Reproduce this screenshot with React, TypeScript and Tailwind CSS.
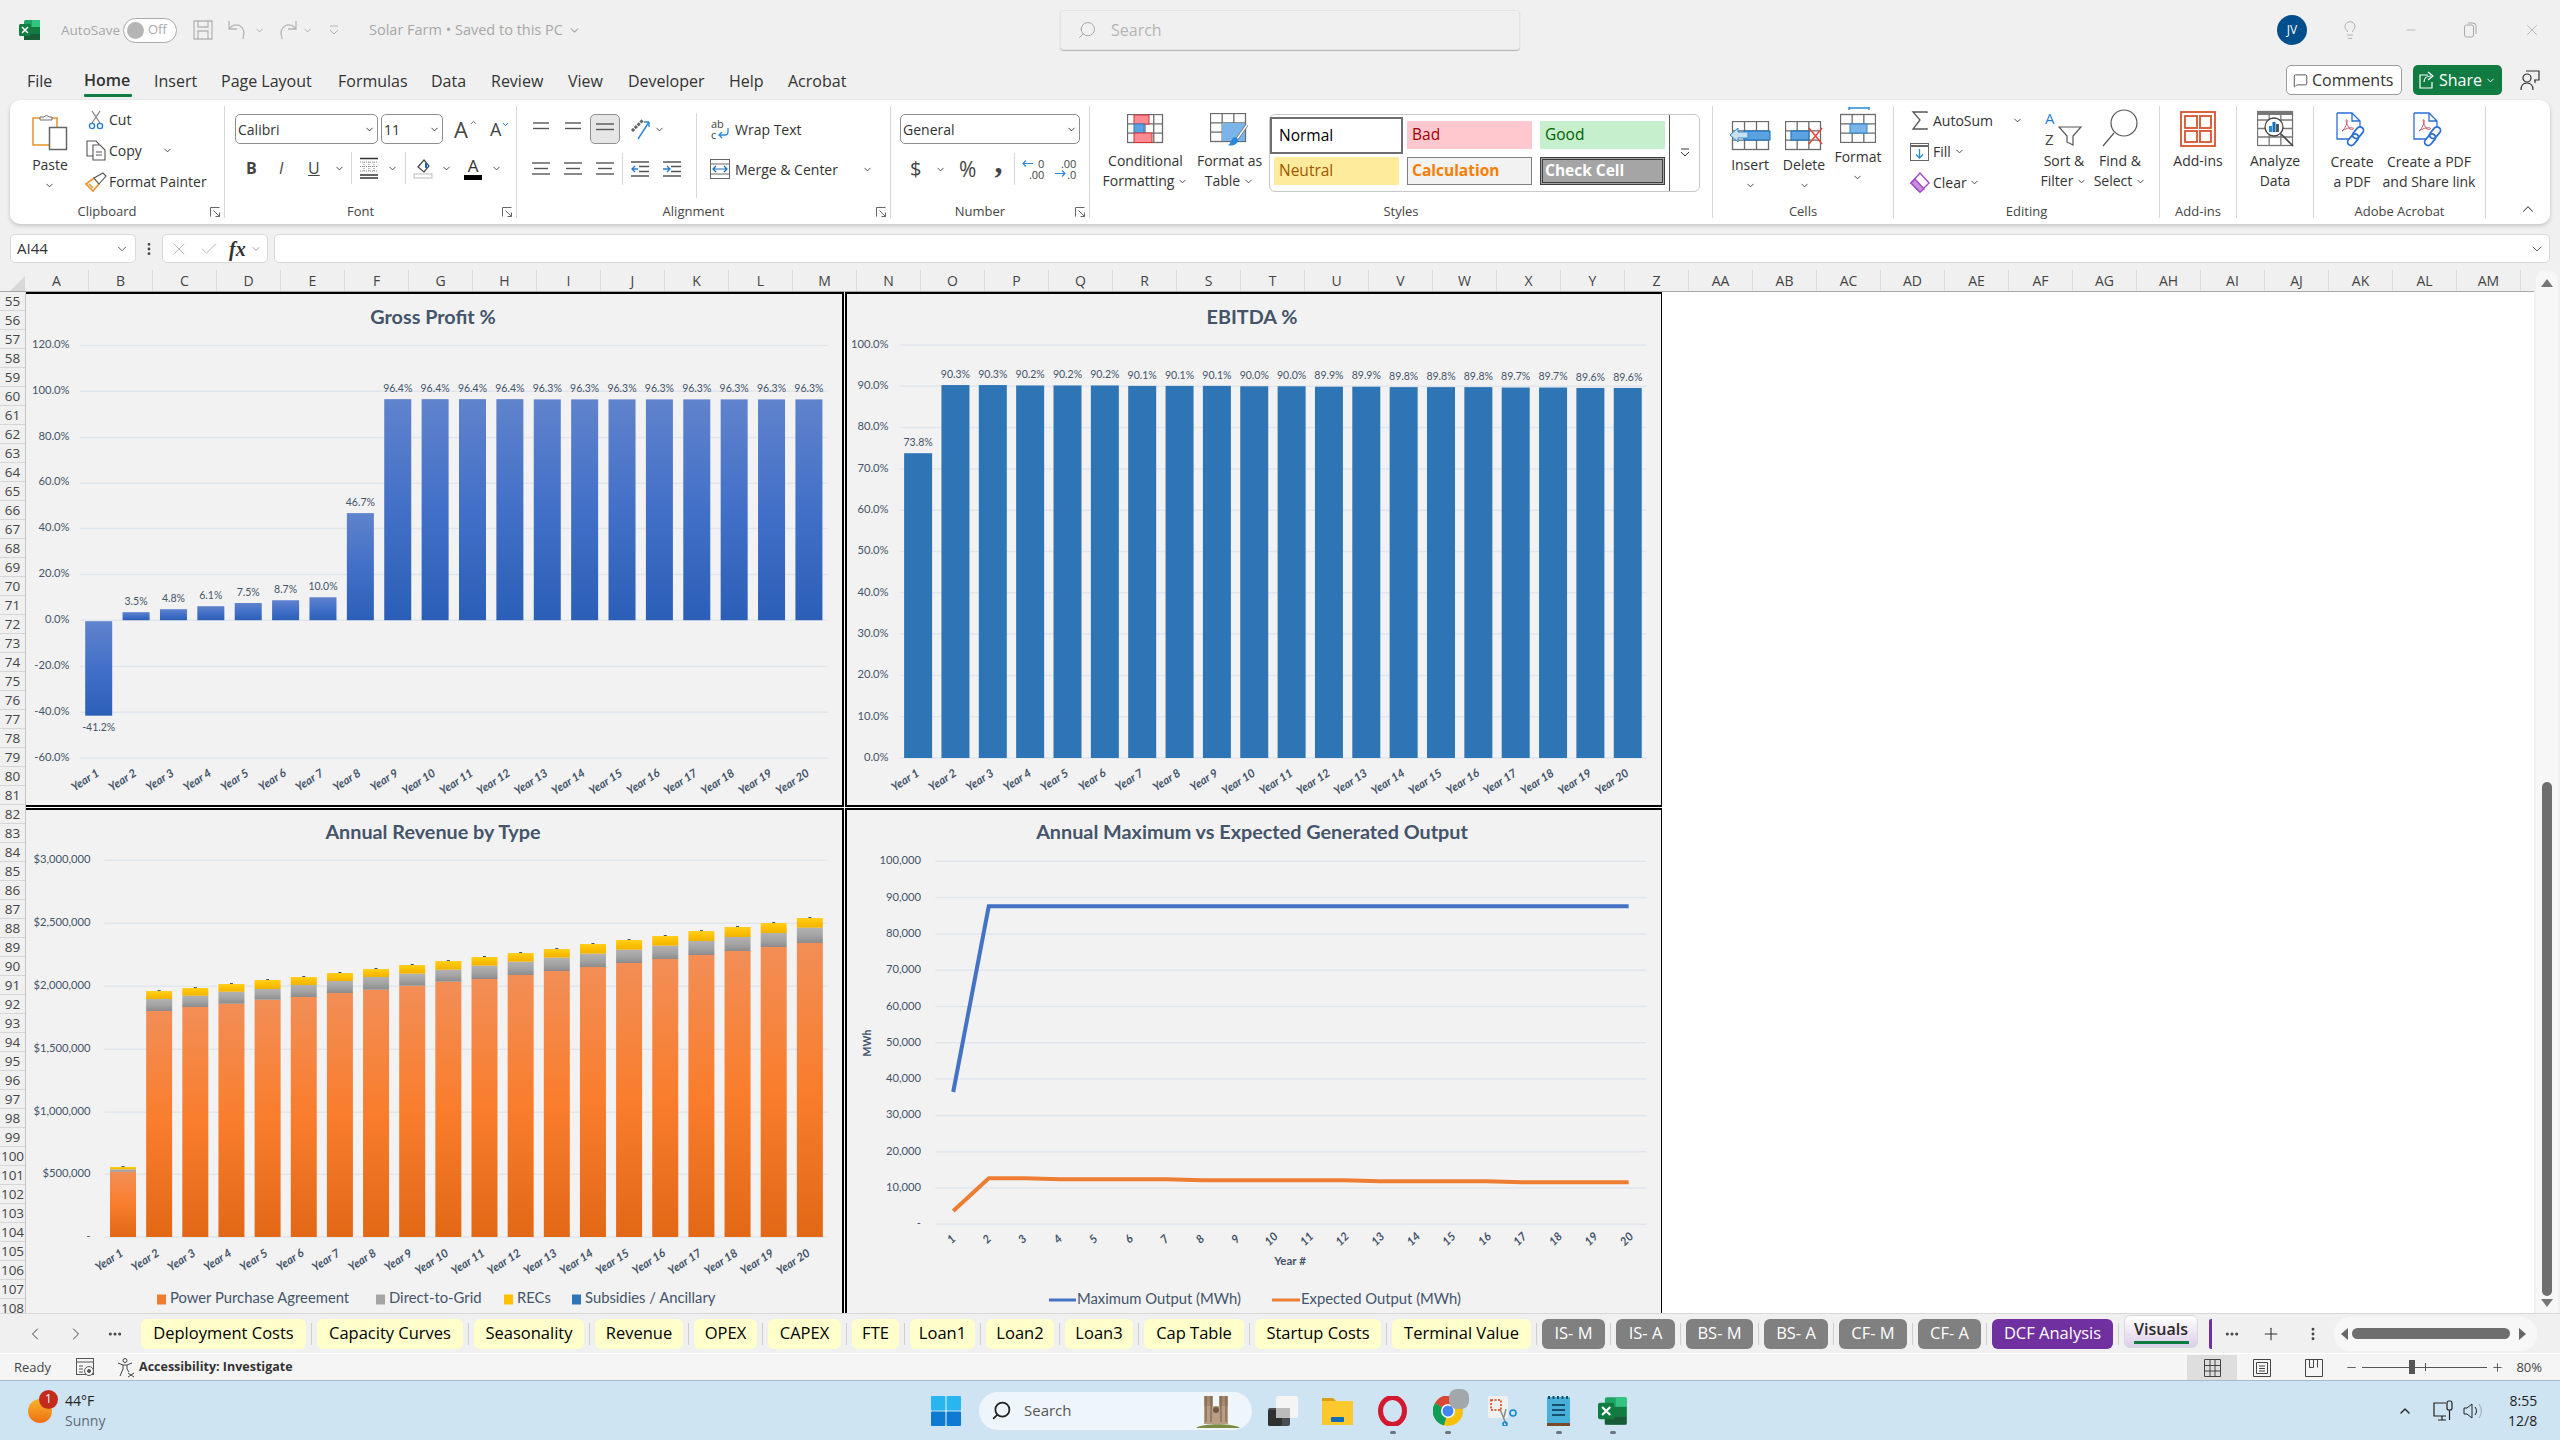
import React from 'react';
import { ChevronDown, ChevronUp, ChevronLeft, ChevronRight, MoreHorizontal, MoreVertical, Plus, Minus, X, Check, Lightbulb, MessageSquare, Search } from 'lucide-react';

const years = Array.from({ length: 20 }, (_, i) => `Year ${i + 1}`);
const columns = [
	'A','B','C','D','E','F','G','H','I','J','K','L','M','N','O','P','Q','R','S','T','U','V','W','X','Y','Z',
	'AA','AB','AC','AD','AE','AF','AG','AH','AI','AJ','AK','AL','AM',
];
const rows = Array.from({ length: 54 }, (_, i) => 55 + i);

const grossProfit = [-41.2, 3.5, 4.8, 6.1, 7.5, 8.7, 10.0, 46.7, 96.4, 96.4, 96.4, 96.4, 96.3, 96.3, 96.3, 96.3, 96.3, 96.3, 96.3, 96.3];
const ebitda = [73.8, 90.3, 90.3, 90.2, 90.2, 90.2, 90.1, 90.1, 90.1, 90.0, 90.0, 89.9, 89.9, 89.8, 89.8, 89.8, 89.7, 89.7, 89.6, 89.6];
// stack tops in page pixels: ppa, direct-to-grid, RECs
const revenueTops = [
	[1171.7, 1169.3, 1167], [1011, 999, 991], [1007, 995.7, 988], [1003.7, 991.7, 984], [999.7, 989, 980],
	[997, 985, 977], [993, 981, 973], [989.7, 977, 969], [985.7, 973.7, 965], [981.7, 969.7, 961],
	[979, 965.7, 957], [975, 961.7, 953], [971, 957.7, 949], [967, 953.7, 944], [963, 949.7, 940],
	[959, 945.7, 936], [955, 941, 931], [951, 937, 927], [947, 933, 923], [943, 927.7, 918],
];
const expected = [1211, 1178.3, 1178.3, 1179.3, 1179.3, 1179.3, 1179.3, 1180.3, 1180.3, 1180.3, 1180.3, 1180.3, 1181.3, 1181.3, 1181.3, 1181.3, 1182.3, 1182.3, 1182.3, 1182.3];

const sheetTabs = [
	{ name: 'Deployment Costs', w: 165, tone: 'y' },
	{ name: 'Capacity Curves', w: 146, tone: 'y' },
	{ name: 'Seasonality', w: 110, tone: 'y' },
	{ name: 'Revenue', w: 88, tone: 'y' },
	{ name: 'OPEX', w: 63, tone: 'y' },
	{ name: 'CAPEX', w: 73, tone: 'y' },
	{ name: 'FTE', w: 47, tone: 'y' },
	{ name: 'Loan1', w: 65, tone: 'y' },
	{ name: 'Loan2', w: 68, tone: 'y' },
	{ name: 'Loan3', w: 68, tone: 'y' },
	{ name: 'Cap Table', w: 100, tone: 'y' },
	{ name: 'Startup Costs', w: 126, tone: 'y' },
	{ name: 'Terminal Value', w: 139, tone: 'y' },
	{ name: 'IS- M', w: 63, tone: 'g' },
	{ name: 'IS- A', w: 59, tone: 'g' },
	{ name: 'BS- M', w: 67, tone: 'g' },
	{ name: 'BS- A', w: 64, tone: 'g' },
	{ name: 'CF- M', w: 68, tone: 'g' },
	{ name: 'CF- A', w: 63, tone: 'g' },
	{ name: 'DCF Analysis', w: 121, tone: 'p' },
];

const ExcelLogo = ({ size = 22 }: { size?: number }) => (
	<svg width={size} height={size} viewBox="0 0 22 22">
		<rect x="5" y="1" width="16" height="20" rx="1.5" fill="#21a366" />
		<rect x="13" y="1" width="8" height="7" fill="#33c481" />
		<rect x="5" y="8" width="16" height="7" fill="#107c41" />
		<rect x="5" y="15" width="16" height="6" fill="#185c37" />
		<rect x="0" y="5" width="12" height="12" rx="1.5" fill="#107c41" />
		<path d="M3 8l6 6M9 8l-6 6" stroke="#fff" strokeWidth="1.6" />
	</svg>
);

const TableGrid = ({ x = 0, y = 0, w, h, cols, rws, color = '#6b6b6b' }: { x?: number; y?: number; w: number; h: number; cols: number; rws: number; color?: string }) => (
	<g stroke={color} strokeWidth="1.3" fill="none">
		<rect x={x + 0.5} y={y + 0.5} width={w} height={h} fill="#fff" />
		{Array.from({ length: cols - 1 }, (_, i) => (
			<path key={i} d={`M${x + 0.5 + ((i + 1) * w) / cols} ${y}v${h}`} />
		))}
		{Array.from({ length: rws - 1 }, (_, i) => (
			<path key={i} d={`M${x} ${y + 0.5 + ((i + 1) * h) / rws}h${w}`} />
		))}
	</g>
);

const PasteIcon = () => (
	<svg width="36" height="38" viewBox="0 0 36 38">
		<rect x="1" y="5" width="24" height="27" fill="#fff" stroke="#e8912d" strokeWidth="1.5" />
		<path d="M8 7V4h4a3 3 0 0 1 5 0h3v3z" fill="#f2f2f2" stroke="#777" />
		<rect x="17.5" y="14.5" width="17" height="22" fill="#fff" stroke="#666" strokeWidth="1.5" />
	</svg>
);
const CutIcon = () => (
	<svg width="16" height="20" viewBox="0 0 16 20" fill="none">
		<path d="M4 13L12 1M12 13L4 1" stroke="#777" strokeWidth="1.1" />
		<circle cx="4" cy="16" r="2.6" stroke="#2b7cd3" strokeWidth="1.4" />
		<circle cx="12" cy="16" r="2.6" stroke="#2b7cd3" strokeWidth="1.4" />
	</svg>
);
const CopyIcon = () => (
	<svg width="21" height="21" viewBox="0 0 21 21" fill="none" stroke="#555" strokeWidth="1.1">
		<path d="M1 1h9l3 3v12H1z" fill="#fff" />
		<path d="M7 5h7l5 5v10H7z" fill="#fff" />
		<path d="M10 12h6M10 15h6" />
	</svg>
);
const PainterIcon = () => (
	<svg width="22" height="20" viewBox="0 0 22 20">
		<path d="M1 12l8-6 5 6-6 7z" fill="#fff" stroke="#e8912d" strokeWidth="1.6" />
		<path d="M9 6l9-5 3 3-7 8z" fill="#fff" stroke="#555" strokeWidth="1.1" />
		<path d="M4 12l4 4" stroke="#e8912d" strokeWidth="1.6" />
	</svg>
);
const Launcher = () => (
	<svg width="11" height="11" viewBox="0 0 11 11" fill="none" stroke="#666">
		<path d="M.5 9.5v-9h9" />
		<path d="M3.5 3.5l6 6M9.5 5.5v4h-4" />
	</svg>
);
const Arrow = ({ className = 'text-[#444]' }: { className?: string }) => <ChevronDown size={11} strokeWidth={2} className={className} />;

const LinesIcon = ({ widths, selected }: { widths: number[]; selected?: boolean }) => (
	<svg width="18" height="18" viewBox="0 0 18 18" stroke="#555" strokeWidth="1.4" className={selected ? 'mt-[2px]' : ''}>
		{widths.map((w, i) => (
			<path key={i} d={`M${(18 - w) / 2} ${3 + i * 5.5}h${w}`} />
		))}
	</svg>
);
const IndentIcon = ({ flip }: { flip?: boolean }) => (
	<svg width="18" height="16" viewBox="0 0 18 16" fill="none" strokeWidth="1.4">
		<path d="M0 1h18M8 5.5h10M8 10.5h10M0 15h18" stroke="#555" />
		<path d={flip ? 'M0 8h6M4 5l3 3-3 3' : 'M7 8H1M4 5L1 8l3 3'} stroke="#2b7cd3" />
	</svg>
);

const ConditionalIcon = () => (
	<svg width="37" height="30" viewBox="0 0 37 30">
		<TableGrid w={35} h={28} cols={4} rws={3} />
		<rect x="7" y="1" width="15" height="9" fill="#ff8a91" stroke="#d13438" />
		<rect x="7" y="10" width="10" height="9" fill="#5ba3e0" stroke="#2b7cd3" />
		<rect x="7" y="19" width="18" height="9.5" fill="#ff8a91" stroke="#d13438" />
	</svg>
);
const TableIcon = () => (
	<svg width="39" height="34" viewBox="0 0 39 34">
		<TableGrid w={35} h={28} cols={3} rws={3} />
		<rect x="12" y="10" width="23" height="18" fill="#7ab4e8" />
		<path d="M37 12L27 26" stroke="#666" strokeWidth="3" />
		<path d="M37 12L27 26" stroke="#fff" strokeWidth="1.5" />
		<path d="M24 24c4 0 5 3 3 6-3 3-7 3-9 2 3-1 3-6 6-8z" fill="#2b88d8" />
	</svg>
);
const InsertIcon = () => (
	<svg width="41" height="30" viewBox="0 0 41 30">
		<TableGrid x={2} w={36} h={28} cols={3} rws={3} />
		<rect x="14" y="10" width="26" height="9" fill="#5ba3e0" stroke="#0f6cbd" />
		<path d="M0 14l8-7v4h10v6H8v4z" fill="#c7e0f4" stroke="#2b88d8" />
	</svg>
);
const DeleteIcon = () => (
	<svg width="38" height="30" viewBox="0 0 38 30">
		<TableGrid w={35} h={28} cols={3} rws={3} />
		<rect x="6" y="10" width="18" height="9" fill="#5ba3e0" stroke="#0f6cbd" />
		<path d="M24 7l13 16M37 7L24 23" stroke="#e8463a" strokeWidth="1.5" />
	</svg>
);
const FormatIcon = () => (
	<svg width="36" height="36" viewBox="0 0 36 36">
		<path d="M9 1h20M9 0v3M29 0v3" stroke="#2b88d8" strokeWidth="1.4" />
		<TableGrid y={7} w={35} h={28} cols={3} rws={3} />
		<rect x="10" y="17" width="17" height="9" fill="#7ab4e8" stroke="#2b88d8" />
	</svg>
);
const SigmaIcon = () => (
	<svg width="18" height="19" viewBox="0 0 18 19" fill="none" stroke="#555" strokeWidth="1.3">
		<path d="M16 2V1H2l7 8-7 9h14v-1" />
	</svg>
);
const FillIcon = () => (
	<svg width="20" height="18" viewBox="0 0 20 18" fill="none">
		<rect x=".5" y=".5" width="18" height="17" fill="#fff" stroke="#666" />
		<path d="M1 3h17" stroke="#666" strokeWidth="2" />
		<path d="M9.5 6v9M6 11.5l3.5 3.5 3.5-3.5" stroke="#2b88d8" strokeWidth="1.3" />
	</svg>
);
const ClearIcon = () => (
	<svg width="20" height="21" viewBox="0 0 20 21" fill="none" stroke="#a349c4" strokeWidth="1.4">
		<path d="M10 1l9 10-9 9-9-9z" fill="#fff" />
		<path d="M1 11l4-4 9 10-4 3z" fill="#c88fe0" />
	</svg>
);
const SortIcon = () => (
	<div className="relative flex h-[36px] w-[38px] flex-col justify-between text-[15px] leading-[15px]">
		<div className="h-[15px] overflow-visible text-[#2b7cd3]">A</div>
		<div className="h-[15px] text-[#444]">Z</div>
		<svg width="24" height="20" viewBox="0 0 24 20" className="absolute left-[13px] top-[15px]">
			<path d="M1 1h22l-8 9v9l-6-3v-6z" fill="#fff" stroke="#555" strokeWidth="1.2" />
		</svg>
	</div>
);
const FindIcon = () => (
	<svg width="38" height="38" viewBox="0 0 38 38" fill="none" stroke="#555" strokeWidth="1.2">
		<circle cx="23" cy="14" r="13" fill="#fff" />
		<path d="M13 24L2 37" />
	</svg>
);
const AddinsIcon = () => (
	<svg width="36" height="36" viewBox="0 0 36 36" fill="none" stroke="#d9512c" strokeWidth="1.8">
		<rect x="1" y="1" width="34" height="34" />
		<rect x="5" y="5" width="12" height="12" />
		<rect x="20" y="5" width="11" height="12" />
		<rect x="5" y="20" width="12" height="11" />
		<rect x="20" y="20" width="11" height="11" />
	</svg>
);
const AnalyzeIcon = () => (
	<svg width="37" height="37" viewBox="0 0 37 37">
		<TableGrid y={1} w={35} h={34} cols={3} rws={4} color="#777" />
		<rect x=".5" y="1" width="35" height="4" fill="#777" />
		<circle cx="17" cy="17" r="9" fill="#fff" stroke="#444" strokeWidth="1.3" />
		<rect x="12" y="16" width="3" height="6" fill="#2b88d8" />
		<rect x="15.5" y="12" width="3" height="10" fill="#0f6cbd" />
		<rect x="19" y="14" width="3" height="8" fill="#555" />
		<path d="M24 24l12 12" stroke="#444" strokeWidth="1.6" />
	</svg>
);
const PdfIcon = () => (
	<svg width="33" height="36" viewBox="0 0 33 36" fill="none" stroke="#2b6fd4" strokeWidth="1.3">
		<path d="M1 1h15l8 8v14M24 9h-8V1M1 1v26h12" fill="#fff" />
		<path d="M6 19c3-2 6-9 5-11-1-2-2 3 3 9 2 1 5 0 3-1-3-1-8 1-11 3z" strokeWidth=".9" stroke="#c04b5a" />
		<rect x="19" y="14" width="7" height="13" rx="3.5" transform="rotate(40 22 20)" fill="#fff" strokeWidth="1.8" />
		<rect x="14" y="21" width="7" height="13" rx="3.5" transform="rotate(40 17 27)" fill="none" strokeWidth="1.8" />
	</svg>
);

const Group = ({ width, label, launcher, children, last }: { width: number; label?: string; launcher?: boolean; children: React.ReactNode; last?: boolean }) => (
	<div className={`relative flex h-[112px] flex-col ${last ? '' : 'border-r border-[#d6d6d6]'}`} style={{ width }}>
		<div className="flex flex-1">{children}</div>
		<div className={`h-[14px] text-center text-[13px] leading-[14px] text-[#444] ${launcher ? 'pr-[20px]' : ''}`}>{label}</div>
		{launcher && (
			<span className="absolute bottom-[0px] right-[3px] flex">
				<Launcher />
			</span>
		)}
	</div>
);

const BigButton = ({ icon, lines, width, arrow = 'below', top = 4, iconH = 41, gap = 4 }: { icon: React.ReactNode; lines: string[]; width: number; arrow?: 'below' | 'inline' | 'none'; top?: number; iconH?: number; gap?: number }) => (
	<div className="flex flex-col items-center text-[14px] leading-[20px] text-[#333]" style={{ width }}>
		<div className="flex items-end" style={{ marginTop: top, height: iconH }}>{icon}</div>
		<div className="whitespace-nowrap text-center" style={{ marginTop: gap }}>
			{lines.map((line, i) => (
				<div key={line} className="flex items-center justify-center gap-[3px]">
					{line}
					{arrow === 'inline' && i === lines.length - 1 && <Arrow />}
				</div>
			))}
			{arrow === 'below' && (
				<div className="flex h-[20px] items-center justify-center">
					<Arrow />
				</div>
			)}
		</div>
	</div>
);

const SmallRow = ({ icon, label, iconW = 24 }: { icon: React.ReactNode; label: string; iconW?: number }) => (
	<div className="flex h-[31px] items-center text-[14px] text-[#333]">
		<div className="flex items-center justify-center" style={{ width: iconW }}>{icon}</div>
		<span className="ml-[1px] whitespace-nowrap">{label}</span>
	</div>
);

const SelectBox = ({ value, width, arrowSize = 11 }: { value: string; width: number; arrowSize?: number }) => (
	<div className="flex h-[30px] items-center justify-between rounded-[5px] border border-[#8f8f8f] bg-white pl-[2px] pr-[2px] text-[14px] text-[#333]" style={{ width }}>
		<span>{value}</span>
		<ChevronDown size={arrowSize} strokeWidth={2} className="text-[#333]" />
	</div>
);

const VSep = ({ className = 'h-[32px]' }: { className?: string }) => <div className={`w-px bg-[#d6d6d6] ${className}`} />;

const DecimalIcon = ({ top, bottom, more }: { top: string; bottom: string; more?: boolean }) => (
	<div className="relative flex h-[22px] w-[22px] flex-col items-end text-[11px] leading-[11px] text-[#444]">
		<span>{top}</span>
		<span>{bottom}</span>
		<svg width="12" height="9" viewBox="0 0 12 9" fill="none" stroke="#2b88d8" strokeWidth="1.2" className={`absolute left-0 ${more ? 'top-[11px]' : 'top-[1px]'}`}>
			<path d={more ? 'M1 4.5h10M8 1.5l3 3-3 3' : 'M11 4.5H1M4 1.5l-3 3 3 3'} />
		</svg>
	</div>
);

const WrapIcon = () => (
	<div className="relative ml-[1px] h-[22px] w-[19px] text-[11px] leading-[11px] text-[#444]">
		<div>ab</div>
		<div>c</div>
		<svg width="13" height="11" viewBox="0 0 13 11" fill="none" stroke="#2b88d8" strokeWidth="1.3" className="absolute left-[6px] top-[10px]">
			<path d="M11 0v4a3 3 0 0 1-3 3H2M5 4L2 7l3 3" />
		</svg>
	</div>
);

const Ribbon = () => (
	<div className="mx-[10px] flex h-[124px] w-[2540px] items-start rounded-[10px] bg-white pt-[6px] shadow-[0_2px_4px_rgba(0,0,0,0.18)]">
		<Group width={215} label="Clipboard" launcher>
			<div className="w-[75px] pl-[7px]">
				<BigButton icon={<PasteIcon />} lines={['Paste']} width={66} />
			</div>
			<div className="-ml-[1px] mt-[-2px] flex flex-col">
				<SmallRow icon={<CutIcon />} label="Cut" />
				<div className="flex items-center">
					<SmallRow icon={<CopyIcon />} label="Copy" />
					<span className="ml-[20px]"><Arrow /></span>
				</div>
				<SmallRow icon={<PainterIcon />} label="Format Painter" />
			</div>
		</Group>

		<Group width={292} label="Font" launcher>
			<div className="pl-[10px] pt-[8px]">
				<div className="flex items-center gap-[3px]">
					<SelectBox value="Calibri" width={143} />
					<SelectBox value="11" width={62} />
					<div className="relative ml-[8px] flex w-[21px] text-[22px] leading-none text-[#444]">A<ChevronUp size={9} className="absolute -right-[3px] top-0" /></div>
					<div className="relative ml-[12px] flex w-[17px] text-[18px] leading-none text-[#444]">A<ChevronDown size={9} strokeWidth={2.5} className="absolute -right-[3px] top-0 text-[#0f6cbd]" /></div>
				</div>
				<div className="mt-[12px] flex h-[24px] items-center text-[#444]">
					<span className="ml-[11px] w-[12px] text-[16px] font-bold">B</span>
					<span className="ml-[21px] w-[8px] text-[16px] italic">I</span>
					<span className="ml-[21px] w-[12px] text-[16px] underline">U</span>
					<span className="ml-[14px]"><Arrow /></span>
					<VSep className="ml-[6px] h-[32px]" />
					<svg width="20" height="22" viewBox="0 0 20 22" fill="none" className="ml-[7px]">
						<path d="M1 1.5h18M1 21h18M1 18h18" stroke="#333" strokeWidth="1.6" />
						<path d="M1 5h18M1 9.5h18M1 14h18M5 5v9M10 5v9M15 5v9" stroke="#888" strokeDasharray="1 1" />
					</svg>
					<span className="ml-[8px]"><Arrow /></span>
					<VSep className="ml-[7px] h-[32px]" />
					<svg width="20" height="22" viewBox="0 0 20 22" fill="none" className="ml-[7px]">
						<path d="M5 10l6-7 5 6-5 6z" stroke="#444" strokeWidth="1.2" />
						<path d="M13 6v5" stroke="#0f6cbd" strokeWidth="2" />
						<rect x="1" y="17" width="18" height="4" fill="#fff" stroke="#bbb" />
					</svg>
					<span className="ml-[8px]"><Arrow /></span>
					<div className="ml-[12px] flex w-[18px] flex-col items-center text-[17px] leading-[17px] text-[#333]">
						A
						<div className="mt-[1px] h-[5px] w-[18px] bg-black" />
					</div>
					<span className="ml-[9px]"><Arrow /></span>
				</div>
			</div>
		</Group>

		<Group width={374} label="Alignment" launcher>
			<div className="pl-[15px] pt-[8px]">
				<div className="flex h-[30px] items-center">
					<div className="w-[32px]"><LinesIcon widths={[16, 16]} /></div>
					<div className="w-[26px]"><LinesIcon widths={[16, 16]} /></div>
					<div className="flex h-[30px] w-[30px] items-center justify-center rounded-[5px] border border-[#8f8f8f] bg-[#e6e6e6]"><LinesIcon widths={[18, 18]} selected /></div>
					<svg width="22" height="24" viewBox="0 0 22 24" fill="none" className="ml-[9px]">
						<path d="M3 14L14 3" stroke="#666" strokeWidth="3" strokeDasharray="3 1" />
						<path d="M9 22L20 5M20 5v5M20 5h-5" stroke="#2b88d8" strokeWidth="1.4" />
					</svg>
					<span className="ml-[3px]"><Arrow /></span>
				</div>
				<div className="mt-[15px] flex h-[20px] items-center">
					<div className="w-[32px]"><LinesIcon widths={[18, 14, 18]} /></div>
					<div className="w-[32px]"><LinesIcon widths={[18, 14, 18]} /></div>
					<div className="w-[26px]"><LinesIcon widths={[18, 14, 18]} /></div>
					<VSep className="h-[32px]" />
					<div className="ml-[8px] w-[32px]"><IndentIcon /></div>
					<div className="w-[18px]"><IndentIcon flip /></div>
				</div>
			</div>
			<div className="ml-[15px] mt-[7px] h-[85px] w-px bg-[#d6d6d6]" />
			<div className="flex flex-col pl-[13px] pt-[9px] text-[14px] text-[#333]">
				<div className="flex h-[28px] items-center gap-[5px]">
					<WrapIcon />
					Wrap Text
				</div>
				<div className="mt-[16px] flex h-[20px] items-center gap-[5px]">
					<svg width="20" height="20" viewBox="0 0 20 20" fill="none">
						<rect x=".5" y=".5" width="19" height="19" stroke="#666" />
						<path d="M.5 5h19M.5 15h19" stroke="#666" />
						<rect x="1" y="6" width="18" height="8" fill="#fff" />
						<path d="M3 10h14M6 7l-3 3 3 3M14 7l3 3-3 3" stroke="#0f6cbd" strokeWidth="1.2" />
					</svg>
					Merge &amp; Center
					<span className="ml-[19px]"><Arrow /></span>
				</div>
			</div>
		</Group>

		<Group width={199} label="Number" launcher>
			<div className="pl-[9px] pt-[8px]">
				<SelectBox value="General" width={180} />
				<div className="mt-[14px] flex h-[22px] items-center text-[#444]">
					<span className="ml-[10px] w-[13px] text-[20px] leading-none">$</span>
					<span className="ml-[12px]"><Arrow /></span>
					<span className="ml-[13px] text-[21px] leading-none">%</span>
					<span className="-mt-[14px] ml-[18px] w-[12px] font-['Liberation_Serif'] text-[32px] font-bold leading-[22px]">,</span>
					<VSep className="ml-[8px] h-[32px]" />
					<div className="ml-[7px]"><DecimalIcon top="0" bottom=".00" /></div>
					<div className="ml-[10px]"><DecimalIcon top=".00" bottom=".0" more /></div>
				</div>
			</div>
		</Group>

		<Group width={623} label="Styles">
			<div className="flex pl-[9px] pt-[2px]">
				<BigButton icon={<ConditionalIcon />} lines={['Conditional', 'Formatting']} width={93} arrow="inline" top={4} iconH={32} gap={7} />
				<BigButton icon={<TableIcon />} lines={['Format as', 'Table']} width={75} arrow="inline" top={4} iconH={35} gap={4} />
			</div>
			<div className="ml-[2px] mt-[8px] flex h-[78px] w-[431px] rounded-[6px] border border-[#c8c8c8]">
				<div className="mt-[2px] grid h-[75px] w-[400px] grid-cols-[133px_133px_125px] grid-rows-[40px_35px] text-[15.5px]">
					<div className="ml-[0px] flex h-[37px] w-[133px] items-center border-2 border-[#6e6e6e] bg-white pl-[7px] text-black">Normal</div>
					<div className="ml-[4px] mt-[4px] flex h-[28px] w-[125px] items-center bg-[#ffc7ce] pl-[5px] text-[#9c0006]">Bad</div>
					<div className="ml-[4px] mt-[4px] flex h-[28px] w-[125px] items-center bg-[#c6efce] pl-[5px] text-[#006100]">Good</div>
					<div className="ml-[4px] flex h-[28px] w-[125px] items-center bg-[#ffeb9c] pl-[5px] text-[#9c5700]">Neutral</div>
					<div className="ml-[4px] flex h-[28px] w-[125px] items-center border border-[#7f7f7f] bg-[#f2f2f2] pl-[4px] font-bold text-[#fa7d00]">Calculation</div>
					<div className="ml-[4px] flex h-[28px] w-[125px] items-center border-[3px] border-double border-[#3f3f3f] bg-[#a5a5a5] pl-[2px] font-bold text-white">Check Cell</div>
				</div>
				<div className="ml-auto flex w-[30px] items-center justify-center rounded-r-[6px] border-l border-[#555]">
					<svg width="10" height="10" viewBox="0 0 10 10" fill="none" stroke="#333"><path d="M1 1h8M1 4l4 4 4-4" /></svg>
				</div>
			</div>
		</Group>

		<Group width={181} label="Cells">
			<div className="flex pl-[10px]">
				<BigButton icon={<InsertIcon />} lines={['Insert']} width={54} />
				<BigButton icon={<DeleteIcon />} lines={['Delete']} width={54} />
				<BigButton icon={<FormatIcon />} lines={['Format']} width={54} top={-4} />
			</div>
		</Group>

		<Group width={266} label="Editing">
			<div className="ml-[14px] mt-[-1px] flex w-[131px] flex-col">
				<div className="flex items-center">
					<SmallRow icon={<SigmaIcon />} label="AutoSum" />
					<span className="ml-[19px]"><Arrow /></span>
				</div>
				<div className="flex items-center">
					<SmallRow icon={<FillIcon />} label="Fill" />
					<span className="ml-[3px]"><Arrow /></span>
				</div>
				<div className="flex items-center">
					<SmallRow icon={<ClearIcon />} label="Clear" />
					<span className="ml-[2px]"><Arrow /></span>
				</div>
			</div>
			<BigButton icon={<SortIcon />} lines={['Sort &', 'Filter']} width={50} arrow="inline" top={0} />
			<div className="ml-[3px]">
				<BigButton icon={<FindIcon />} lines={['Find &', 'Select']} width={56} arrow="inline" top={0} />
			</div>
		</Group>

		<Group width={77} label="Add-ins">
			<BigButton icon={<AddinsIcon />} lines={['Add-ins']} width={76} arrow="none" top={0} />
		</Group>

		<Group width={77} label="">
			<BigButton icon={<AnalyzeIcon />} lines={['Analyze', 'Data']} width={76} arrow="none" top={0} />
		</Group>

		<Group width={172} label="Adobe Acrobat">
			<div className="ml-[13px] flex">
				<BigButton icon={<PdfIcon />} lines={['Create', 'a PDF']} width={50} arrow="none" top={1} />
				<div className="ml-[4px]">
					<BigButton icon={<PdfIcon />} lines={['Create a PDF', 'and Share link']} width={96} arrow="none" top={1} />
				</div>
			</div>
		</Group>

		<div className="flex h-[112px] flex-1 items-end justify-end pb-[0px] pr-[13px]">
			<ChevronUp size={18} strokeWidth={1.4} className="text-[#444]" />
		</div>
	</div>
);

const chartText = "font-['Lato']";
const slate = '#44546a';

const ChartTitle = ({ x, y, children }: { x: number; y: number; children: string }) => (
	<text x={x} y={y + 2} textAnchor="middle" dominantBaseline="middle" fontSize="19.8" fontWeight="700" fill={slate}>{children}</text>
);
const GridLines = ({ ys, x1, x2 }: { ys: number[]; x1: number; x2: number }) => (
	<g stroke="#e1e5ec" strokeWidth="1.5">
		{ys.map((y) => <path key={y} d={`M${x1} ${y}H${x2}`} />)}
	</g>
);
const AxisLabels = ({ x, items }: { x: number; items: { y: number; text: string }[] }) => (
	<g fontSize="11.2" fill={slate} textAnchor="end" dominantBaseline="middle">
		{items.map((it) => <text key={it.text} x={x} y={it.y}>{it.text}</text>)}
	</g>
);
const YearLabels = ({ x0, step, y }: { x0: number; step: number; y: number }) => (
	<g fontSize="11.5" fontWeight="700" fontStyle="italic" fill={slate} textAnchor="end">
		{years.map((label, i) => {
			const x = x0 + i * step + 4;
			return <text key={label} x={x} y={y} transform={`rotate(-33 ${x} ${y})`}>{label}</text>;
		})}
	</g>
);

const GrossProfitChart = () => {
	const zero = 620.2;
	const x0 = 80;
	const step = 37.38;
	return (
		<svg width="815" height="511" viewBox="26 294 815 511" className={`block ${chartText}`}>
			<defs>
				<linearGradient id="blueBar" x1="0" y1="0" x2="0" y2="1">
					<stop offset="0" stopColor="#6083cc" />
					<stop offset="0.5" stopColor="#4270c8" />
					<stop offset="1" stopColor="#2b5fb7" />
				</linearGradient>
			</defs>
			<ChartTitle x={433} y={316.5}>Gross Profit %</ChartTitle>
			<GridLines ys={[345.4, 391.2, 437.4, 483.2, 528.6, 574.4, 620.2, 666.4, 712.2, 758]} x1={x0} x2={827.6} />
			<AxisLabels x={69.5} items={['120.0%', '100.0%', '80.0%', '60.0%', '40.0%', '20.0%', '0.0%', '-20.0%', '-40.0%', '-60.0%'].map((text, i) => ({ text, y: 345 + i * 45.88 }))} />
			{grossProfit.map((v, i) => {
				const h = Math.abs(v) * 2.293;
				const x = x0 + i * step + 5.2;
				return (
					<g key={i}>
						<rect x={x} y={v >= 0 ? zero - h : zero + 1} width="27" height={h} fill="url(#blueBar)" />
						<text x={x + 13.5} y={v >= 0 ? zero - h - 10 : zero + h + 14} textAnchor="middle" dominantBaseline="middle" fontSize="10.5" fill={slate}>{v.toFixed(1)}%</text>
					</g>
				);
			})}
			<YearLabels x0={96} step={step} y={775} />
		</svg>
	);
};

const EbitdaChart = () => {
	const base = 758;
	const x0 = 899.6;
	const step = 37.35;
	return (
		<svg width="814" height="511" viewBox="847 294 814 511" className={`block ${chartText}`}>
			<ChartTitle x={1252} y={316.5}>EBITDA %</ChartTitle>
			<GridLines ys={Array.from({ length: 11 }, (_, i) => 345 + i * 41.3)} x1={x0} x2={1646.5} />
			<AxisLabels x={888.5} items={['100.0%', '90.0%', '80.0%', '70.0%', '60.0%', '50.0%', '40.0%', '30.0%', '20.0%', '10.0%', '0.0%'].map((text, i) => ({ text, y: 345 + i * 41.3 }))} />
			{ebitda.map((v, i) => {
				const h = v * 4.13;
				const x = x0 + i * step + 4.5;
				return (
					<g key={i}>
						<rect x={x} y={base - h} width="28" height={h} fill="#2e75b6" />
						<text x={x + 14} y={base - h - 10} textAnchor="middle" dominantBaseline="middle" fontSize="10.5" fill={slate}>{v.toFixed(1)}%</text>
					</g>
				);
			})}
			<YearLabels x0={916} step={step} y={775} />
		</svg>
	);
};

const Legend = ({ x, y, color, children }: { x: number; y: number; color: string; children: string }) => (
	<g>
		<rect x={x} y={y - 5} width="9" height="10" fill={color} />
		<text x={x + 13} y={y} fontSize="14.8" fill={slate} dominantBaseline="middle">{children}</text>
	</g>
);

const RevenueChart = () => {
	const base = 1237;
	const x0 = 104.6;
	const step = 36.15;
	return (
		<svg width="815" height="508" viewBox="26 810 815 508" className={`block ${chartText}`}>
			<defs>
				<linearGradient id="orangeBar" x1="0" y1="0" x2="0" y2="1">
					<stop offset="0" stopColor="#f28e56" />
					<stop offset="0.5" stopColor="#f97d2c" />
					<stop offset="1" stopColor="#e26816" />
				</linearGradient>
				<linearGradient id="grayBar" x1="0" y1="0" x2="0" y2="1">
					<stop offset="0" stopColor="#b2b2b2" />
					<stop offset="0.5" stopColor="#a4a4a4" />
					<stop offset="1" stopColor="#8c8c8c" />
				</linearGradient>
				<linearGradient id="goldBar" x1="0" y1="0" x2="0" y2="1">
					<stop offset="0" stopColor="#ffcf20" />
					<stop offset="0.5" stopColor="#ffc000" />
					<stop offset="1" stopColor="#efb300" />
				</linearGradient>
			</defs>
			<ChartTitle x={433} y={831.5}>Annual Revenue by Type</ChartTitle>
			<GridLines ys={[860.3, 923.3, 986.3, 1049.3, 1112.3, 1174.3, 1237]} x1={x0} x2={827.6} />
			<AxisLabels x={90.5} items={['$3,000,000', '$2,500,000', '$2,000,000', '$1,500,000', '$1,000,000', '$500,000', '-'].map((text, i) => ({ text, y: 860.5 + i * 62.8 }))} />
			{revenueTops.map(([ppa, dtg, rec], i) => {
				const x = x0 + i * step + 5.4;
				return (
					<g key={i}>
						<rect x={x} y={ppa} width="26" height={base - ppa} fill="url(#orangeBar)" />
						<rect x={x} y={dtg} width="26" height={ppa - dtg} fill="url(#grayBar)" />
						<rect x={x} y={rec} width="26" height={dtg - rec} fill="url(#goldBar)" />
						<rect x={x + 11.5} y={rec - 1} width="3" height="1" fill={slate} />
					</g>
				);
			})}
			<YearLabels x0={120} step={step} y={1255} />
			<Legend x={157} y={1299.5} color="#ee7d31">Power Purchase Agreement</Legend>
			<Legend x={376} y={1299.5} color="#a5a5a5">Direct-to-Grid</Legend>
			<Legend x={504} y={1299.5} color="#ffc000">RECs</Legend>
			<Legend x={572} y={1299.5} color="#2e75b6">Subsidies / Ancillary</Legend>
		</svg>
	);
};

const OutputChart = () => {
	const xAt = (i: number) => 953.2 + i * 35.55;
	const maxLine = [`${xAt(0)},1092`, `${xAt(1)},906.3`, `${xAt(19)},906.3`].join(' ');
	const expLine = expected.map((y, i) => `${xAt(i)},${y}`).join(' ');
	return (
		<svg width="814" height="508" viewBox="847 810 814 508" className={`block ${chartText}`}>
			<ChartTitle x={1252} y={831.5}>Annual Maximum vs Expected Generated Output</ChartTitle>
			<GridLines ys={Array.from({ length: 11 }, (_, i) => 861.3 + i * 36.3)} x1={935.4} x2={1646.5} />
			<AxisLabels x={921} items={['100,000', '90,000', '80,000', '70,000', '60,000', '50,000', '40,000', '30,000', '20,000', '10,000', '-'].map((text, i) => ({ text, y: 861.5 + i * 36.3 }))} />
			<polyline points={maxLine} fill="none" stroke="#4472c4" strokeWidth="4" />
			<polyline points={expLine} fill="none" stroke="#ed7d31" strokeWidth="4" />
			<text x={868} y={1043} fontSize="10.5" fontWeight="700" fill={slate} textAnchor="middle" transform="rotate(-90 868 1043)" dominantBaseline="middle">MWh</text>
			<g fontSize="11.5" fontWeight="700" fontStyle="italic" fill={slate} textAnchor="middle">
				{years.map((_, i) => {
					const x = xAt(i) - 2;
					return <text key={i} x={x} y={1243} transform={`rotate(-45 ${x} 1239)`}>{i + 1}</text>;
				})}
			</g>
			<text x={1290} y={1262} textAnchor="middle" dominantBaseline="middle" fontSize="11.5" fontWeight="700" fill={slate}>Year #</text>
			<path d="M1049 1300h27" stroke="#4472c4" strokeWidth="3" />
			<text x={1077} y={1300} fontSize="14.8" fill={slate} dominantBaseline="middle">Maximum Output (MWh)</text>
			<path d="M1272 1300h28" stroke="#ed7d31" strokeWidth="3" />
			<text x={1301} y={1300} fontSize="14.8" fill={slate} dominantBaseline="middle">Expected Output (MWh)</text>
		</svg>
	);
};

const SheetTab = ({ name, w, tone }: { name: string; w: number; tone: string }) => (
	<>
		<div
			className={`flex h-[30px] items-center justify-center whitespace-nowrap rounded-[6px] text-[16.5px] ${tone === 'y' ? 'bg-[#ffffcc] text-black' : tone === 'g' ? 'bg-[#808080] text-white' : 'bg-[#7030a0] text-white'}`}
			style={{ width: w }}
		>
			{name}
		</div>
		<div className="mx-[5px] h-[22px] w-px bg-[#cfcfcf]" />
	</>
);

const SheetTabs = () => (
	<div className="flex h-[40px] items-center border-t border-[#d8d8d8] bg-[#f0f0f0]">
		<div className="flex w-[141px] items-center text-[#444]">
			<ChevronLeft size={20} strokeWidth={1.2} className="ml-[25px]" />
			<ChevronRight size={20} strokeWidth={1.2} className="ml-[21px]" />
			<MoreHorizontal size={16} strokeWidth={2.6} className="ml-[21px]" />
		</div>
		{sheetTabs.map((tab) => <SheetTab key={tab.name} {...tab} />)}
		<div className="mb-[5px] flex h-[33px] w-[74px] flex-col items-center self-end rounded-[6px] border border-[#d8d8d8] bg-gradient-to-b from-white to-[#dccfe8] pb-[2px] text-[16px] font-semibold text-[#2a2a2a]">
			<span className="mt-[1px] leading-[24px]">Visuals</span>
			<div className="h-[3px] w-[55px] bg-[#107c41]" />
		</div>
		<div className="ml-[11px] h-[30px] w-[3px] rounded-l-[2px] bg-[#7030a0]" />
		<MoreHorizontal size={16} strokeWidth={2.6} className="ml-[12px] text-[#444]" />
		<Plus size={20} strokeWidth={1.3} className="ml-[21px] text-[#333]" />
		<MoreVertical size={16} strokeWidth={2.4} className="ml-[24px] text-[#444]" />
		<div className="ml-[13px] flex h-[34px] w-[203px] items-center rounded-[16px] bg-[#f7f7f7] px-[7px]">
			<div className="h-0 w-0 border-y-[6px] border-r-[7px] border-y-transparent border-r-[#666]" />
			<div className="ml-[4px] h-[11px] w-[158px] rounded-full bg-[#6e6e6e]" />
			<div className="ml-[9px] h-0 w-0 border-y-[6px] border-l-[7px] border-y-transparent border-l-[#666]" />
		</div>
	</div>
);

const StatusBar = () => (
	<div className="flex h-[28px] items-center border-y border-t-white border-b-[#a9bac6] bg-[#f5f5f5] pt-[1px] text-[13px] text-[#444]">
		<span className="ml-[14px]">Ready</span>
		<svg width="19" height="20" viewBox="0 0 19 20" fill="none" stroke="#555" className="ml-[25px]">
			<rect x=".5" y=".5" width="17" height="16" />
			<path d="M.5 4h17M3 8h4M3 11h4M3 14h4" />
			<circle cx="13" cy="13" r="4.5" fill="#f5f5f5" />
			<circle cx="13" cy="13" r="1.5" fill="#555" />
		</svg>
		<svg width="18" height="20" viewBox="0 0 18 20" fill="none" stroke="#444" className="ml-[22px]">
			<circle cx="8" cy="2.5" r="2" />
			<path d="M1 5l5 2h4l5-2M6 7v4l-3 7M10 7v4l2 3M11 15l6 4M17 15l-6 4" />
		</svg>
		<span className="ml-[4px] text-[12.5px] font-bold text-[#333]">Accessibility: Investigate</span>
		<div className="ml-auto flex h-full w-[50px] items-center justify-center bg-[#dedede]">
			<svg width="17" height="18" viewBox="0 0 17 18" fill="none" stroke="#444"><path d="M.5.5h16v17H.5zM.5 6.5h16M.5 12h16M6 .5v17M11 .5v17" /></svg>
		</div>
		<svg width="18" height="18" viewBox="0 0 18 18" fill="none" stroke="#444" className="ml-[16px]">
			<path d="M.5.5h17v17H.5zM3.5 3.5h11v11h-11zM6 7h6M6 9.5h6M6 12h6" />
		</svg>
		<svg width="18" height="18" viewBox="0 0 18 18" fill="none" stroke="#444" className="ml-[34px]">
			<path d="M.5.5h17v17H.5zM4.5.5v8h4v-8M12.5.5v8" />
		</svg>
		<Minus size={13} strokeWidth={1.4} className="ml-[22px] text-[#333]" />
		<div className="relative ml-[4px] h-px w-[125px] bg-[#555]">
			<div className="absolute left-[47px] top-[-7px] h-[14px] w-[6px] bg-[#555]" />
			<div className="absolute left-[63px] top-[-4px] h-[8px] w-px bg-[#555]" />
		</div>
		<Plus size={13} strokeWidth={1.4} className="ml-[4px] text-[#333]" />
		<span className="ml-[12px] mr-[18px] text-[13px]">80%</span>
	</div>
);

const TaskIcon = ({ className, children, dot }: { className: string; children: React.ReactNode; dot?: boolean }) => (
	<div className={`relative flex ${className}`}>
		{children}
		{dot && <div className="absolute -bottom-[8px] left-1/2 h-[3px] w-[6px] -translate-x-1/2 rounded-full bg-[#6b7680]" />}
	</div>
);

const Taskbar = () => (
	<div className="flex h-[59px] items-center bg-[#cfe4f3]">
		<div className="relative ml-[28px] h-[24px] w-[24px] rounded-full bg-gradient-to-b from-[#f6b62b] to-[#ef6c10]">
			<div className="absolute -top-[9px] left-[11px] flex h-[19px] w-[19px] items-center justify-center rounded-full bg-[#c42b1c] text-[12px] text-white">1</div>
		</div>
		<div className="ml-[13px] w-[867px] text-[14px] leading-[20px]">
			<div className="text-[#222]">44°F</div>
			<div className="text-[#5f6b75]">Sunny</div>
		</div>
		<svg width="30" height="30" viewBox="0 0 30 30" className="-ml-[1px]">
			<rect x="0" y="0" width="14.4" height="14.4" rx="1" fill="#29b6f0" />
			<rect x="15.6" y="0" width="14.4" height="14.4" rx="1" fill="#29b6f0" />
			<rect x="0" y="15.6" width="14.4" height="14.4" rx="1" fill="#0f7ad2" />
			<rect x="15.6" y="15.6" width="14.4" height="14.4" rx="1" fill="#0f7ad2" />
		</svg>
		<div className="ml-[18px] flex h-[38px] w-[273px] items-center rounded-full bg-[#eff6fb] text-[15px] text-[#555]">
			<Search size={21} strokeWidth={2} className="ml-[12px] -scale-x-100 text-[#222]" />
			<span className="ml-[12px]">Search</span>
			<svg width="44" height="36" viewBox="0 0 44 36" className="ml-auto mr-[12px]">
				<rect x="8" y="3" width="9" height="26" fill="#a58a70" />
				<rect x="23" y="3" width="9" height="26" fill="#a58a70" />
				<rect x="8" y="13" width="24" height="18" fill="#b89d82" />
				<path d="M10 3v26M15 3v26M25 3v26M30 3v26" stroke="#6f5a49" strokeWidth="1" />
				<circle cx="20" cy="17" r="3" fill="#6f5a49" />
				<path d="M0 35c6-5 38-5 44 0z" fill="#7e8a42" />
			</svg>
		</div>
		<svg width="30" height="30" viewBox="0 0 30 30" className="ml-[16px]">
			<rect x="8" y="0" width="22" height="22" rx="2" fill="#f4f4f4" />
			<rect x="0" y="14" width="14" height="16" rx="2" fill="#222" />
			<rect x="0" y="12" width="22" height="18" rx="2" fill="#333" opacity=".85" />
			<rect x="8" y="12" width="14" height="10" fill="#bbb" />
		</svg>
		<svg width="31" height="28" viewBox="0 0 31 28" className="ml-[24px]">
			<path d="M0 1h11l3 3h17v24H0z" fill="#fbc92c" />
			<path d="M0 1h11l3 3H0z" fill="#d99f13" />
			<rect x="9" y="20" width="13" height="5" rx="1" fill="#0f6cbd" />
		</svg>
		<TaskIcon className="ml-[25px]" dot>
			<svg width="29" height="30" viewBox="0 0 29 30" fill="none">
				<ellipse cx="14.5" cy="15" rx="12" ry="13.5" stroke="#d4182d" strokeWidth="5" />
			</svg>
		</TaskIcon>
		<TaskIcon className="ml-[26px] h-[30px] w-[30px]" dot>
			<svg width="30" height="30" viewBox="0 0 30 30">
				<circle cx="15" cy="15" r="15" fill="#f4c20d" />
				<path d="M15 15L2 7A15 15 0 0 1 28 7z" fill="#db4437" />
				<path d="M15 15L2 7A15 15 0 0 0 11 29.5z" fill="#0f9d58" />
				<circle cx="15" cy="15" r="7" fill="#fff" />
				<circle cx="15" cy="15" r="5.5" fill="#4285f4" />
			</svg>
			<div className="absolute -top-[7px] left-[16px] h-[20px] w-[20px] rounded-[8px] bg-[#a2a7ab]" />
		</TaskIcon>
		<svg width="30" height="30" viewBox="0 0 30 30" fill="none" className="ml-[25px]">
			<rect x="0" y="0" width="20" height="22" rx="2" fill="#f0f0f0" />
			<rect x="3" y="4" width="10" height="10" stroke="#d83b01" strokeWidth="1.5" strokeDasharray="2 1.5" />
			<path d="M12 13l6 15M18 13l-2 8" stroke="#888" strokeWidth="1.4" />
			<circle cx="25" cy="17" r="3" stroke="#0f8ad2" strokeWidth="1.6" />
			<circle cx="17" cy="28" r="2" stroke="#0f8ad2" strokeWidth="1.6" />
		</svg>
		<TaskIcon className="ml-[29px]" dot>
			<svg width="23" height="30" viewBox="0 0 23 30">
				<rect x="0" y="1" width="23" height="29" rx="1" fill="#48afd8" />
				<rect x="0" y="27" width="23" height="3" fill="#7a4a28" />
				<path d="M2 0v3M6.5 0v3M11 0v3M15.5 0v3M20 0v3" stroke="#16506e" strokeWidth="2" />
				<path d="M5 9h13M5 14h13M5 19h13" stroke="#16506e" strokeWidth="2" />
			</svg>
		</TaskIcon>
		<TaskIcon className="ml-[28px]" dot><ExcelLogo size={30} /></TaskIcon>
		<ChevronUp size={16} strokeWidth={2} className="ml-[769px] text-[#222]" />
		<svg width="20" height="21" viewBox="0 0 20 21" fill="none" stroke="#222" strokeWidth="1.2" className="ml-[20px]">
			<path d="M13 3H1v13h12M5 20h8M9 16v4" />
			<rect x="14" y="1" width="5" height="9" rx="2" />
			<path d="M16.5 10v10" />
		</svg>
		<svg width="21" height="20" viewBox="0 0 21 20" fill="none" stroke="#222" strokeWidth="1" className="ml-[10px]">
			<path d="M1 7h3l5-4v14l-5-4H1z" />
			<path d="M12 6c2 3 2 5 0 8" />
			<path d="M16 3c3 5 3 9 0 14" stroke="#9aa7b0" />
		</svg>
		<div className="ml-[24px] text-right text-[14px] leading-[20px] text-[#222]">
			<div>8:55</div>
			<div>12/8</div>
		</div>
	</div>
);

export default function App() {
	return (
		<div className="flex h-[1440px] w-[2560px] flex-col overflow-hidden bg-[#f0f0f0] font-['Open_Sans']">
			{/* title bar */}
			<div className="flex h-[60px] items-center text-[#a8a8a8]">
				<div className="ml-[19px]"><ExcelLogo /></div>
				<span className="ml-[20px] w-[58px] whitespace-nowrap text-[13.5px]">AutoSave</span>
				<div className="ml-[4px] flex h-[25px] w-[54px] items-center rounded-full border border-[#aaa] bg-white pl-[3px]">
					<div className="h-[17px] w-[17px] rounded-full bg-[#b5b5b5]" />
					<span className="ml-[4px] text-[13px]">Off</span>
				</div>
				<svg width="20" height="20" viewBox="0 0 20 20" fill="none" stroke="#b5b5b5" strokeWidth="1.3" className="ml-[16px]">
					<path d="M1 1h18v18H1zM5 1v6h10V1M5 19v-8h10v8" />
				</svg>
				<svg width="20" height="20" viewBox="0 0 20 20" fill="none" stroke="#b5b5b5" strokeWidth="1.3" className="ml-[15px]">
					<path d="M1 1v8h8M1 9c6-8 18-4 14 10" />
				</svg>
				<ChevronDown size={11} className="ml-[6px]" />
				<svg width="20" height="20" viewBox="0 0 20 20" fill="none" stroke="#b5b5b5" strokeWidth="1.3" className="ml-[12px]">
					<path d="M19 1v8h-8M19 9C13 1 1 5 5 19" />
				</svg>
				<ChevronDown size={11} className="ml-[5px]" />
				<svg width="12" height="12" viewBox="0 0 12 12" fill="none" stroke="#b5b5b5" className="ml-[15px]">
					<path d="M2 2h8M2 6l4 4 4-4" />
				</svg>
				<span className="ml-[29px] w-[194px] whitespace-nowrap text-[14.5px]">Solar Farm  •  Saved to this PC</span>
				<ChevronDown size={13} className="ml-[5px]" />
				<div className="ml-[479px] flex h-[40px] w-[460px] items-center rounded-[4px] border border-[#e4e4e4] shadow-[0_1px_1px_rgba(0,0,0,0.25)]">
					<Search size={20} strokeWidth={1.2} className="ml-[16px] -scale-x-100" />
					<span className="ml-[14px] text-[16px] text-[#b5b5b5]">Search</span>
				</div>
				<div className="ml-[757px] flex h-[30px] w-[30px] items-center justify-center rounded-full bg-[#004e8c] text-[12px] text-white">JV</div>
				<Lightbulb size={20} strokeWidth={1.1} className="ml-[33px]" />
				<Minus size={14} strokeWidth={1.2} className="ml-[44px]" />
				<svg width="13" height="16" viewBox="0 0 13 16" fill="none" stroke="#a8a8a8" className="ml-[46px]">
					<rect x=".5" y="3" width="9" height="12" rx="2" />
					<path d="M4 1h5a3 3 0 0 1 3 3v8" />
				</svg>
				<X size={18} strokeWidth={1} className="ml-[46px]" />
			</div>

			{/* ribbon tabs */}
			<div className="flex h-[40px] items-start pt-[5px] text-[16px] text-[#333]">
				<div className="ml-[27px] flex h-[32px] items-center">
					<span className="w-[57px]">File</span>
					<span className="flex h-[32px] w-[70px] flex-col font-semibold">
						<span className="flex h-[29px] items-center">Home</span>
						<span className="h-[3px] w-[48px] rounded-[1px] bg-[#107c41]" />
					</span>
					<span className="w-[67px]">Insert</span>
					<span className="w-[117px] whitespace-nowrap">Page Layout</span>
					<span className="w-[93px]">Formulas</span>
					<span className="w-[60px]">Data</span>
					<span className="w-[77px]">Review</span>
					<span className="w-[60px]">View</span>
					<span className="w-[101px]">Developer</span>
					<span className="w-[59px]">Help</span>
					<span>Acrobat</span>
				</div>
				<div className="ml-auto flex items-center">
					<div className="flex h-[30px] w-[116px] items-center rounded-[5px] border border-[#9a9a9a] bg-white pl-[6px] text-[16px]">
						<MessageSquare size={15} strokeWidth={1.3} />
						<span className="ml-[4px]">Comments</span>
					</div>
					<div className="ml-[11px] flex h-[30px] w-[89px] items-center rounded-[5px] bg-[#107c41] pl-[6px] text-[16px] text-white">
						<svg width="16" height="18" viewBox="0 0 16 18" fill="none" stroke="#fff" strokeWidth="1.2"><path d="M9 4H1v13h12v-6M5 11c0-4 3-6 7-6M9 1l5 4-5 4" /></svg>
						<span className="ml-[4px]">Share</span>
						<ChevronDown size={11} strokeWidth={2} className="ml-[3px]" />
					</div>
					<svg width="20" height="22" viewBox="0 0 20 22" fill="none" stroke="#333" strokeWidth="1.2" className="ml-[18px] mr-[20px]">
						<path d="M6 2h13v9h-5M15 11v3" />
						<circle cx="7" cy="9" r="4" fill="#f0f0f0" />
						<path d="M1 21c0-5 2-7 6-7s6 2 6 7" />
					</svg>
				</div>
			</div>

			<Ribbon />

			{/* formula bar */}
			<div className="ml-[10px] mt-[10px] flex h-[29px] w-[2540px] items-stretch">
				<div className="flex w-[126px] items-center justify-between rounded-[5px] border border-[#d8d8d8] bg-white pl-[6px] pr-[6px] text-[15px] text-[#333]">
					AI44
					<ChevronDown size={14} strokeWidth={1.4} />
				</div>
				<MoreVertical size={16} strokeWidth={2.2} className="ml-[5px] self-center text-[#444]" />
				<div className="ml-[5px] flex w-[106px] items-center rounded-[5px] border border-[#d8d8d8] bg-white text-[#b0b0b0]">
					<X size={20} strokeWidth={1.1} className="ml-[6px]" />
					<Check size={20} strokeWidth={1.1} className="ml-[10px]" />
					<span className="ml-[10px] font-['Liberation_Serif'] text-[20px] font-bold italic leading-none text-[#333]">fx</span>
					<ChevronDown size={12} strokeWidth={1.3} className="ml-[4px] text-[#666]" />
				</div>
				<div className="ml-[6px] flex flex-1 items-center justify-end rounded-[5px] border border-[#d8d8d8] bg-white pr-[4px]">
					<ChevronDown size={16} strokeWidth={1.3} className="text-[#444]" />
				</div>
			</div>

			{/* sheet */}
			<div className="mt-[7px] flex h-[1043px] w-[2560px] overflow-hidden">
				<div className="flex w-[2534px] flex-col">
					<div className="flex h-[22px] border-b border-[#a8a8a8]">
						<div className="flex w-[25px] items-end justify-end pl-[10px]">
							<div className="h-0 w-0 border-b-[15px] border-l-[15px] border-b-[#d8d8d8] border-l-transparent" />
						</div>
						{columns.map((c) => (
							<div key={c} className="flex w-[64px] items-center justify-center border-r border-[#dcdcdc] text-[14px] text-[#444]">{c}</div>
						))}
					</div>
					<div className="flex h-[1021px] overflow-hidden">
						<div className="w-[26px] shrink-0 border-r border-[#c4c4c4]">
							{rows.map((r) => (
								<div key={r} className="flex h-[19px] items-center justify-center border-b border-[#d6d6d6] text-[13.5px] text-[#444]">{r}</div>
							))}
						</div>
						<div className="flex-1 bg-white">
							<div className="grid w-[1636px] grid-cols-[818px_817px] gap-[1px]">
								<div className="border-y-2 border-r-2 border-black bg-[#f2f2f2]"><GrossProfitChart /></div>
								<div className="border-y-2 border-l-2 border-r border-black bg-[#f2f2f2]"><EbitdaChart /></div>
								<div className="border-t-2 border-r-2 border-black bg-[#f2f2f2]"><RevenueChart /></div>
								<div className="border-t-2 border-l-2 border-r border-black bg-[#f2f2f2]"><OutputChart /></div>
							</div>
						</div>
					</div>
				</div>
				<div className="flex w-[26px] flex-col items-center">
					<div className="flex h-full w-[22px] flex-col items-center rounded-t-[10px] bg-[#f7f7f7] pt-[9px]">
						<div className="h-0 w-0 border-x-[6px] border-b-[8px] border-x-transparent border-b-[#777]" />
						<div className="mt-[495px] h-[514px] w-[10px] rounded-full bg-[#6e6e6e]" />
						<div className="mt-[3px] h-0 w-0 border-x-[6px] border-t-[8px] border-x-transparent border-t-[#777]" />
					</div>
				</div>
			</div>

			<SheetTabs />
			<StatusBar />
			<Taskbar />
		</div>
	);
}
